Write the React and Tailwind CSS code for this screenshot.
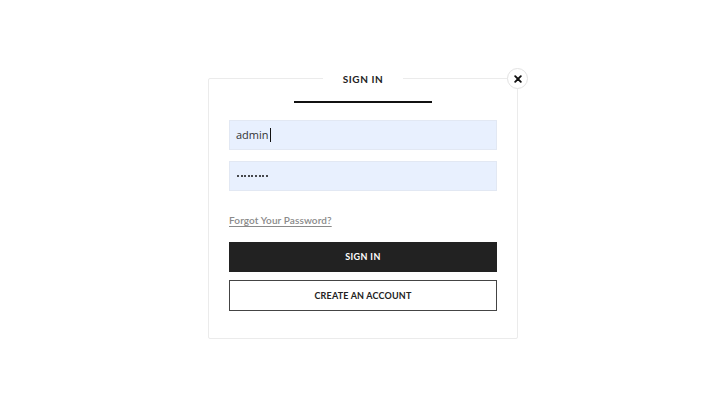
export default function App() {
  const dots = [0, 1, 2, 3, 4, 5, 6, 7, 8];
  return (
    <div className="w-full h-[404px] bg-white flex justify-center pt-[78px]" style={{ fontFamily: "Lato, 'Open Sans', sans-serif" }}>
      <div className="relative w-[310px] h-[261px] border border-[#ebebeb] rounded-[2px] px-[20px] flex flex-col">
        <div className="absolute left-1/2 -translate-x-1/2 -top-[8px] bg-white w-[80px] h-[16px] flex items-center justify-center text-[10px] font-bold tracking-[0.06em] text-[#222]">
          SIGN IN
        </div>
        <button className="absolute -right-[11px] -top-[11px] w-[21px] h-[21px] rounded-full bg-white border border-[#e2e2e2] flex items-center justify-center">
          <svg width="8" height="8" viewBox="0 0 8 8">
            <path d="M1.2 1.2 L6.8 6.8 M6.8 1.2 L1.2 6.8" stroke="#111" strokeWidth="1.9" strokeLinecap="round" />
          </svg>
        </button>
        <div className="mx-auto mt-[22px] w-[138px] h-[2px] bg-[#111]" />
        <div className="mt-[17px] h-[30px] bg-[#e8f0fe] border border-[#e2e8f3] flex items-center pl-[6px] text-[11px] text-[#333]" style={{ fontFamily: "'Open Sans', sans-serif" }}>
          admin<span className="inline-block w-[1px] h-[14px] bg-[#111] ml-[1px]" />
        </div>
        <div className="mt-[11px] h-[30px] bg-[#e8f0fe] border border-[#e2e8f3] flex items-center pl-[7px] gap-[1.6px]">
          {dots.map((d) => (
            <span key={d} className="w-[2px] h-[2px] rounded-full bg-[#111]" />
          ))}
        </div>
        <a className="mt-[22px] self-start text-[10px] text-[#8a8a8a] underline underline-offset-2 font-semibold tracking-[0.01em]">
          Forgot Your Password?
        </a>
        <button className="mt-[14px] h-[30px] bg-[#222] text-white text-[9px] font-bold tracking-[0.04em] flex items-center justify-center">
          SIGN IN
        </button>
        <button className="mt-[8px] h-[31px] bg-white border border-[#444] text-[#222] text-[9px] font-bold tracking-[0.02em] flex items-center justify-center">
          CREATE AN ACCOUNT
        </button>
      </div>
    </div>
  );
}
